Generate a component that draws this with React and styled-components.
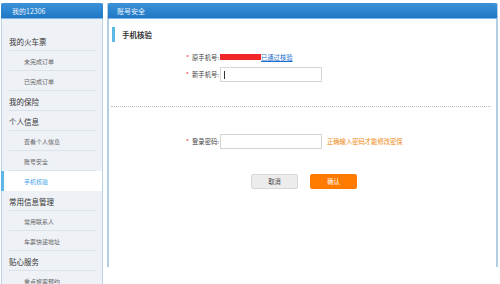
import React from "react";
import styled, { createGlobalStyle } from "styled-components";

const Global = createGlobalStyle`
  html, body { margin: 0; padding: 0; background: #fff; }
  body { font-family: "Noto Sans CJK SC", "Noto Sans", sans-serif; }
  * { box-sizing: border-box; }
`;

const Page = styled.div`
  display: flex;
  align-items: flex-start;
  gap: 4px;
  padding: 3px 0 0 1px;
  width: 500px;
  height: 284px;
  overflow: hidden;
`;

const Sidebar = styled.aside`
  width: 102px;
  height: 300px;
  flex: none;
  background: #eef1f6;
  border-left: 1px solid #b9d3ea;
  border-right: 1px solid #b9d3ea;
`;

const PanelHeader = styled.div`
  height: 16px;
  display: flex;
  align-items: center;
  padding-left: ${(p) => p.$indent}px;
  background: linear-gradient(#3c92d8, #1f78c6);
  border-bottom: 1px solid #7fb6e6;
  border-radius: 2px 2px 0 0;
  color: #eaf3fc;
  font-size: 7px;
  margin: 0 -1px;
`;

const Menu = styled.ul`
  list-style: none;
  margin: 12px 0 0;
  padding: 0;
`;

const MenuItem = styled.li`
  position: relative;
  height: 20px;
  display: flex;
  align-items: center;
  padding-left: ${(p) => (p.$sub ? 22 : 7)}px;
  font-size: ${(p) => (p.$sub ? 6 : 7.5)}px;
  color: ${(p) => (p.$active ? "#44a3e6" : p.$sub ? "#666" : "#333")};
  background: ${(p) => (p.$active ? "#fff" : "transparent")};
  &::after {
    content: "";
    position: absolute;
    left: 7px;
    right: 6px;
    bottom: 0;
    height: 1px;
    background: ${(p) => (p.$active ? "transparent" : "#dde3eb")};
  }
  &::before {
    content: "";
    display: ${(p) => (p.$active ? "block" : "none")};
    position: absolute;
    left: -1px;
    top: 0;
    bottom: 0;
    width: 3px;
    background: #5fb4e8;
  }
`;

const Main = styled.section`
  width: 391px;
  height: 264px;
  flex: none;
  background: #fff;
  border-left: 2px solid #b3cde3;
  border-right: 2px solid #b3cde3;
`;

const Content = styled.div`
  padding: 8px 3px 0 3px;
`;

const SectionTitle = styled.h2`
  margin: 0;
  height: 15px;
  display: flex;
  align-items: center;
  gap: 7px;
  font-size: 7.5px;
  font-weight: bold;
  color: #333;
  &::before {
    content: "";
    width: 3px;
    height: 15px;
    background: #5cb8e6;
  }
`;

const Form = styled.div`
  display: grid;
  grid-template-columns: 50px auto;
  row-gap: ${(p) => p.$gap}px;
  align-items: center;
  justify-content: start;
  margin: ${(p) => p.$top}px 0 0 58px;
`;

const Label = styled.label`
  font-size: 6.3px;
  color: #444;
  text-align: right;
  padding-right: 1px;
  white-space: nowrap;
`;

const Star = styled.span`
  color: #e33;
  margin-right: 3px;
`;

const Field = styled.div`
  display: flex;
  align-items: center;
  gap: ${(p) => p.$gap || 0}px;
  height: ${(p) => p.$h}px;
`;

const Masked = styled.span`
  width: 41px;
  height: 6px;
  background: #f0262a;
`;

const Verified = styled.a`
  font-size: 6.3px;
  color: #1c6fd1;
  text-decoration: underline;
`;

const Input = styled.div`
  width: 102px;
  height: 15px;
  border: 1px solid #d5d5d5;
  background: #fff;
  display: flex;
  align-items: center;
  padding-left: 3px;
  &::after {
    content: "";
    display: ${(p) => (p.$caret ? "block" : "none")};
    width: 1px;
    height: 8px;
    background: #333;
  }
`;

const Hint = styled.span`
  font-size: 6.3px;
  color: #f08a12;
`;

const Divider = styled.hr`
  margin: 24px 2px 0 -1px;
  border: 0;
  border-top: 1px dotted #bdbdbd;
`;

const Buttons = styled.div`
  display: flex;
  gap: 12px;
  margin: 25px 0 0 139px;
`;

const Button = styled.button`
  width: 47px;
  height: 15px;
  padding: 0;
  border-radius: 2px;
  font-family: inherit;
  font-size: 6.3px;
  border: 1px solid ${(p) => (p.$primary ? "#ff7b00" : "#d8d8d8")};
  background: ${(p) => (p.$primary ? "#ff7b00" : "#ececec")};
  color: ${(p) => (p.$primary ? "#fff" : "#444")};
`;

const menu = [
  { t: "我的火车票" },
  { t: "未完成订单", sub: true },
  { t: "已完成订单", sub: true },
  { t: "我的保险" },
  { t: "个人信息" },
  { t: "查看个人信息", sub: true },
  { t: "账号安全", sub: true },
  { t: "手机核验", sub: true, active: true },
  { t: "常用信息管理" },
  { t: "常用联系人", sub: true },
  { t: "车票快递地址", sub: true },
  { t: "贴心服务" },
  { t: "重点旅客预约", sub: true },
];

export default function App() {
  return (
    <>
      <Global />
      <Page>
        <Sidebar>
          <PanelHeader $indent={11}>我的12306</PanelHeader>
          <Menu>
            {menu.map((m) => (
              <MenuItem key={m.t} $sub={m.sub} $active={m.active}>
                {m.t}
              </MenuItem>
            ))}
          </Menu>
        </Sidebar>
        <Main>
          <PanelHeader $indent={9}>账号安全</PanelHeader>
          <Content>
            <SectionTitle>手机核验</SectionTitle>
            <Form $gap={4} $top={9}>
              <Label>
                <Star>*</Star>原手机号:
              </Label>
              <Field $h={12}>
                <Masked />
                <Verified>已通过核验</Verified>
              </Field>
              <Label>
                <Star>*</Star>新手机号:
              </Label>
              <Field $h={15}>
                <Input $caret />
              </Field>
            </Form>
            <Divider />
            <Form $gap={4} $top={26}>
              <Label>
                <Star>*</Star>登录密码:
              </Label>
              <Field $h={16} $gap={5}>
                <Input />
                <Hint>正确输入密码才能修改密保</Hint>
              </Field>
            </Form>
            <Buttons>
              <Button>取消</Button>
              <Button $primary>确认</Button>
            </Buttons>
          </Content>
        </Main>
      </Page>
    </>
  );
}
